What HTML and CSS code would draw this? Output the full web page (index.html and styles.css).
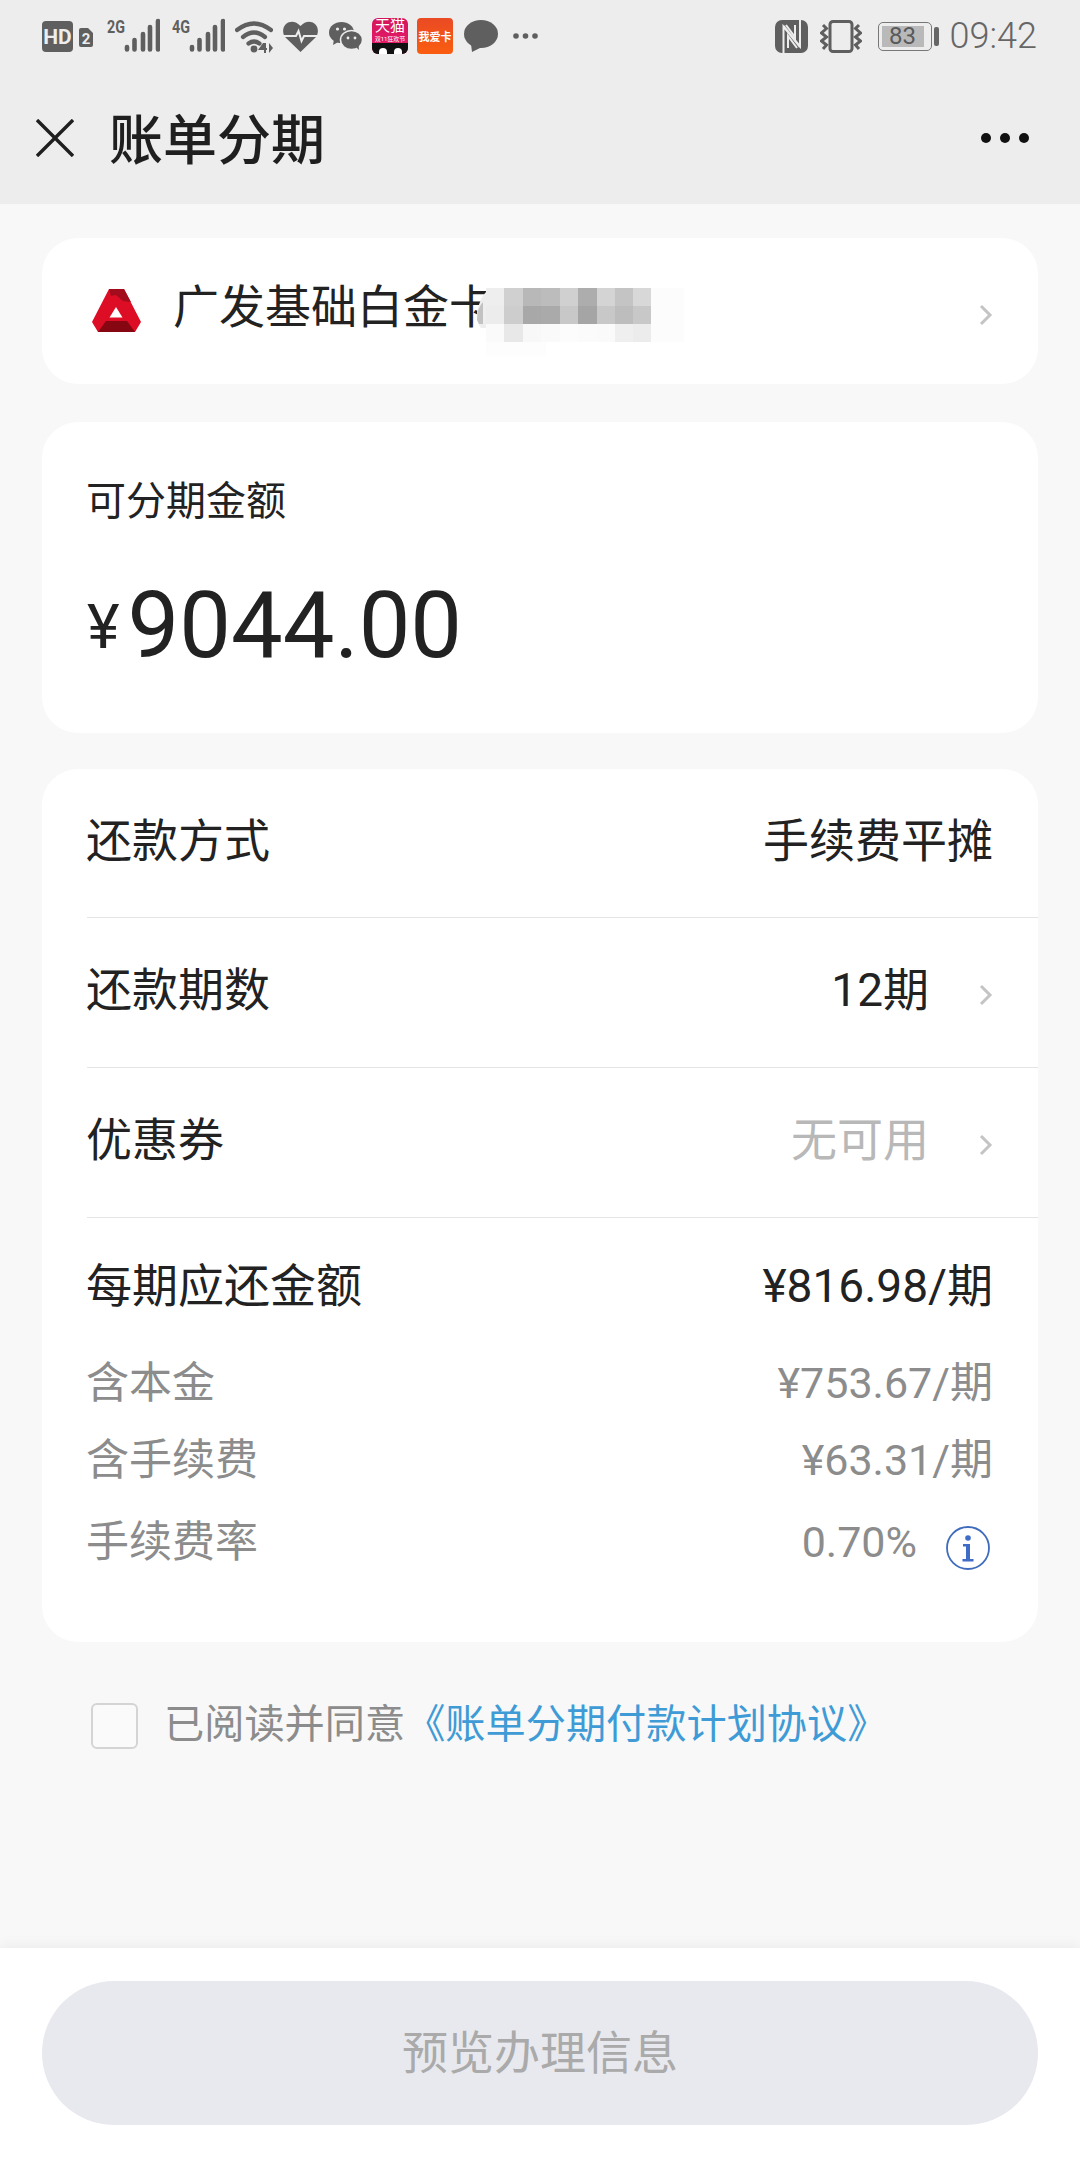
FILE: index.html
```html
<!DOCTYPE html>
<html lang="zh-CN">
  <head>
    <meta charset="UTF-8" />
    <meta name="viewport" content="width=device-width, initial-scale=1.0" />
    <title>账单分期</title>
    <link rel="stylesheet" href="styles.css">
  </head>
  <body>
    <div class="page">
      <div class="top">
        <div class="status">
          <div class="status-left">
            <svg class="ic-hd" width="31" height="31" viewBox="0 0 31 31"><rect width="31" height="31" rx="4" fill="#5f5f5f"/><text x="15.5" y="23" text-anchor="middle" class="svg-label" font-size="21" fill="#ededed">HD</text></svg>
            <svg class="ic-sim" width="14" height="19" viewBox="0 0 14 19"><path d="M2 0h7l5 5v12a2 2 0 0 1-2 2H2a2 2 0 0 1-2-2V2a2 2 0 0 1 2-2z" fill="#5f5f5f"/><text x="7" y="16" text-anchor="middle" class="svg-label" font-size="15" fill="#ededed">2</text></svg>
            <svg class="ic-net1" width="53" height="36" viewBox="0 -2 53 36"><text x="0" y="15" class="svg-label" font-size="19" fill="#5f5f5f" textLength="18" lengthAdjust="spacingAndGlyphs">2G</text><g stroke="#5f5f5f" stroke-width="4.6" stroke-linecap="round"><path d="M20 29v2.500M27.500 22v9.500M36 16v15.500M43 9v22.500M51 3v28.500"/></g></svg>
            <svg class="ic-net2" width="53" height="36" viewBox="0 -2 53 36"><text x="0" y="15" class="svg-label" font-size="19" fill="#5f5f5f" textLength="18" lengthAdjust="spacingAndGlyphs">4G</text><g stroke="#5f5f5f" stroke-width="4.6" stroke-linecap="round"><path d="M20 29v2.500M27.500 22v9.500M36 16v15.500M43 9v22.500M51 3v28.500"/></g></svg>
            <svg width="38" height="33" viewBox="0 0 38 33"><g fill="none" stroke="#5f5f5f" stroke-width="4.200" stroke-linecap="round"><path d="M2 10Q19-3 36 10"/><path d="M8 17Q19 8 30 17"/><path d="M13.500 23.500Q19 19.500 24.500 23.500"/></g><circle cx="19" cy="29" r="3.400" fill="#5f5f5f"/><path d="M28 23l-5 7h6v3h2v-3h1v-2h-1v-5z" fill="#5f5f5f"/><path d="M34 23v10l4-5z" fill="#5f5f5f"/></svg>
            <svg width="35" height="31" viewBox="0 0 35 31"><path d="M17.500 31L2.500 16.500C-1 12.500-.5 6 3 3c4-3.500 10-3 14.500 2 4.500-5 10.500-5.500 14.500-2 3.500 3 4 9.500.5 13.500z" fill="#5f5f5f"/><path d="M0 15h13l2.500-5 3 10 2.500-5h14" fill="none" stroke="#ededed" stroke-width="2"/></svg>
            <svg class="ic-wechat" width="33" height="28" viewBox="0 0 33 28"><ellipse cx="12.500" cy="10.500" rx="12.500" ry="10.500" fill="#5f5f5f"/><path d="M5 17l-1 6 7-4z" fill="#5f5f5f"/><ellipse cx="22.500" cy="18" rx="11" ry="9.500" fill="#5f5f5f" stroke="#ededed" stroke-width="1.500"/><path d="M27 25l3 3-.5-5z" fill="#5f5f5f"/><g fill="#ededed"><circle cx="8.500" cy="7" r="1.600"/><circle cx="15.500" cy="7" r="1.600"/><circle cx="19" cy="16" r="1.400"/><circle cx="26" cy="16" r="1.400"/></g></svg>
            <div class="app-tmall">
              <span class="tmall-name">天猫</span>
              <span class="tmall-sub">双11狂欢节</span>
              <span class="tmall-face"><i></i><i></i></span>
            </div>
            <div class="app-card">
              <span class="card-name">我爱卡</span>
            </div>
            <svg class="ic-bubble" width="34" height="32" viewBox="0 0 34 32"><ellipse cx="17" cy="14" rx="17" ry="14" fill="#5f5f5f"/><path d="M7 24l1 8 10-5z" fill="#5f5f5f"/></svg>
            <svg class="ic-dots" width="25" height="6" viewBox="0 0 25 6"><g fill="#5f5f5f"><circle cx="3" cy="3" r="2.800"/><circle cx="12.500" cy="3" r="2.800"/><circle cx="22" cy="3" r="2.800"/></g></svg>
          </div>
          <div class="status-right">
            <svg width="33" height="33" viewBox="0 0 33 33"><rect width="33" height="33" rx="7" fill="#5f5f5f"/><path d="M8.500 33V6.500L25 27M25 0v26.500L8.500 6M13 28V16l9 12M20 5v12l-9-12" fill="none" stroke="#ededed" stroke-width="2"/></svg>
            <svg class="ic-vibrate" width="42" height="33" viewBox="0 0 42 33"><rect x="10" y="1.500" width="22" height="30" rx="3" fill="none" stroke="#5f5f5f" stroke-width="3"/><g fill="none" stroke="#5f5f5f" stroke-width="3"><path d="M3 5l3.500 3.500L1.500 13l5 4-5 4 5 4L3 29"/><path d="M39 5l-3.500 3.500 5 4.500-5 4 5 4-5 4 3.500 4"/></g></svg>
            <div class="battery"><span class="battery-fill">83</span></div>
            <span class="battery-nub"></span>
            <span class="time">09:42</span>
          </div>
        </div>
        <div class="nav">
          <svg class="close" width="38" height="38" viewBox="0 0 38 38"><path d="M1 1l36 36M37 1L1 37" stroke="#1f1f1f" stroke-width="3.400"/></svg>
          <h1 class="title">账单分期</h1>
          <svg class="more" width="48" height="10" viewBox="0 0 48 10"><g fill="#111"><circle cx="5" cy="5" r="5"/><circle cx="24" cy="5" r="5"/><circle cx="43" cy="5" r="5"/></g></svg>
        </div>
      </div>

      <div class="main">
        <div class="card bank">
          <svg class="bank-logo" width="50" height="44" viewBox="0 0 50 44">
            <path d="M18 0h15l17 33-6 10H7L1 33z" fill="#dc0d24"/>
            <path d="M18 0h15l7 13-8-1-7-6-5 1z" fill="#a30c1c"/>
            <path d="M7 43l8-11h21l8 11z" fill="#860711"/>
            <path d="M25 18l6.500 10.500h-13z" fill="#fff"/>
          </svg>
          <span class="bank-name">广发基础白金卡</span>
          <svg class="mosaic" width="216" height="68" viewBox="0 0 216 68">
            <path d="M9 24Q12 10 18 4V40H13Q9 36 9 24z" fill="#eeeeee"/>
            <path d="M9 32Q9 20 15 14V36H11z" fill="#c2c2c2"/>
            <rect x="183" y="0" width="33" height="54" fill="#fcfcfc"/>
            <rect x="18" y="54" width="60" height="14" fill="#fdfdfd"/>
            <rect x="18" y="0" width="18" height="18" fill="#eeeeee"/>
            <rect x="36" y="0" width="19" height="18" fill="#d0d0d0"/>
            <rect x="55" y="0" width="18" height="18" fill="#b8b8b8"/>
            <rect x="73" y="0" width="19" height="18" fill="#bcbcbc"/>
            <rect x="92" y="0" width="18" height="18" fill="#d0d0d0"/>
            <rect x="110" y="0" width="19" height="18" fill="#adadad"/>
            <rect x="129" y="0" width="18" height="18" fill="#d4d4d4"/>
            <rect x="147" y="0" width="18" height="18" fill="#c4c4c4"/>
            <rect x="165" y="0" width="18" height="18" fill="#d8d8d8"/>
            <rect x="18" y="18" width="18" height="18" fill="#ececec"/>
            <rect x="36" y="18" width="19" height="18" fill="#cdcdcd"/>
            <rect x="55" y="18" width="18" height="18" fill="#a8a8a8"/>
            <rect x="73" y="18" width="19" height="18" fill="#aaaaaa"/>
            <rect x="92" y="18" width="18" height="18" fill="#c8c8c8"/>
            <rect x="110" y="18" width="19" height="18" fill="#a5a5a5"/>
            <rect x="129" y="18" width="18" height="18" fill="#c8c8c8"/>
            <rect x="147" y="18" width="18" height="18" fill="#bdbdbd"/>
            <rect x="165" y="18" width="18" height="18" fill="#c8c8c8"/>
            <rect x="18" y="36" width="18" height="18" fill="#fafafa"/>
            <rect x="36" y="36" width="19" height="18" fill="#e8e8e8"/>
            <rect x="55" y="36" width="18" height="18" fill="#f8f8f8"/>
            <rect x="73" y="36" width="19" height="18" fill="#fafafa"/>
            <rect x="92" y="36" width="18" height="18" fill="#fcfcfc"/>
            <rect x="110" y="36" width="19" height="18" fill="#fbfbfb"/>
            <rect x="129" y="36" width="18" height="18" fill="#fafafa"/>
            <rect x="147" y="36" width="18" height="18" fill="#efefef"/>
            <rect x="165" y="36" width="18" height="18" fill="#ececec"/>
          </svg>
          <svg class="chevron" width="14" height="22" viewBox="0 0 14 22"><path d="M2 2l9 9-9 9" fill="none" stroke="#c4c4c4" stroke-width="3"/></svg>
        </div>

        <div class="card amount">
          <div class="amount-label">可分期金额</div>
          <div class="amount-value"><span class="yen">¥</span><span class="num">9044.00</span></div>
        </div>

        <div class="card plan">
          <div class="row">
            <span>还款方式</span>
            <span>手续费平摊</span>
          </div>
          <div class="row">
            <span>还款期数</span>
            <span class="row-right">12期<svg class="chevron" width="14" height="22" viewBox="0 0 14 22"><path d="M2 2l9 9-9 9" fill="none" stroke="#c4c4c4" stroke-width="3"/></svg></span>
          </div>
          <div class="row">
            <span>优惠券</span>
            <span class="row-right none">无可用<svg class="chevron" width="14" height="22" viewBox="0 0 14 22"><path d="M2 2l9 9-9 9" fill="none" stroke="#c4c4c4" stroke-width="3"/></svg></span>
          </div>
          <div class="detail">
            <div class="detail-main">
              <span>每期应还金额</span>
              <span>¥816.98/期</span>
            </div>
            <div class="detail-sub first">
              <span>含本金</span>
              <span>¥753.67/期</span>
            </div>
            <div class="detail-sub">
              <span>含手续费</span>
              <span>¥63.31/期</span>
            </div>
            <div class="detail-sub last">
              <span>手续费率</span>
              <span class="rate">0.70%<svg class="info" width="44" height="44" viewBox="0 0 44 44"><circle cx="22" cy="22" r="21" fill="none" stroke="#3f6cbd" stroke-width="1.800"/><circle cx="22" cy="12" r="2.800" fill="#3f6cc6"/><path d="M17 18h7v15h3.500v2.500h-11V33H20V20.500h-3z" fill="#3f6cc6"/></svg></span>
            </div>
          </div>
        </div>

        <div class="agree">
          <span class="checkbox"></span>
          <span class="agree-text">已阅读并同意<a class="agree-link">《账单分期付款计划协议》</a></span>
        </div>
      </div>

      <div class="footer">
        <button class="preview">预览办理信息</button>
      </div>
    </div>
  </body>
</html>
```

FILE: styles.css
```css
* {
  margin: 0;
  padding: 0;
  box-sizing: border-box;
}
body {
  font-family: Roboto, "Noto Sans CJK SC", sans-serif;
  color: #222;
  background-color: #f8f8f8;
}
.page {
  display: flex;
  flex-direction: column;
  height: 2160px;
  overflow: hidden;
}
.svg-label {
  font-family: "Roboto", sans-serif;
  font-weight: 700;
}

/* status bar + title */
.top {
  height: 204px;
  background-color: #ededed;
}
.status {
  display: flex;
  justify-content: space-between;
  align-items: center;
  height: 72px;
  padding: 0 43px 0 42px;
}
.status-left,
.status-right {
  display: flex;
  align-items: center;
  gap: 10px;
}
.ic-sim {
  margin-left: -4px;
  margin-top: 2px;
}
.ic-net1 {
  margin-left: 4px;
  margin-top: -4px;
}
.ic-net2 {
  margin-left: 2px;
  margin-top: -4px;
}
.ic-wechat {
  margin-left: 1px;
}
.app-tmall {
  position: relative;
  display: flex;
  flex-direction: column;
  align-items: center;
  width: 36px;
  height: 36px;
  border-radius: 6px;
  overflow: hidden;
  color: #fff;
  background-image: linear-gradient(#d3155c, #e81e6a);
}
.tmall-name {
  font-size: 15px;
  line-height: 17px;
}
.tmall-sub {
  font-size: 6px;
  line-height: 8px;
  white-space: nowrap;
}
.tmall-face {
  display: flex;
  justify-content: space-around;
  align-items: flex-end;
  width: 100%;
  height: 11px;
  padding: 0 3px;
  background-color: #111;
}
.tmall-face i {
  width: 8px;
  height: 6px;
  border-radius: 4px 4px 0 0;
  background-color: #fff;
}
.app-card {
  display: flex;
  justify-content: center;
  align-items: center;
  width: 36px;
  height: 36px;
  margin-left: -1px;
  border-radius: 4px;
  background-image: linear-gradient(#ea4a24, #fa5d0f);
}
.card-name {
  font-size: 11px;
  font-weight: 700;
  white-space: nowrap;
  color: #fff;
}
.ic-bubble {
  margin-left: 1px;
}
.ic-dots {
  margin-left: 5px;
}
.status-right {
  gap: 0;
}
.ic-vibrate {
  margin-left: 12px;
}
.battery {
  width: 54px;
  height: 29px;
  margin-left: 16px;
  padding: 3px;
  border: 1.5px solid #777;
  border-radius: 5px;
}
.battery-fill {
  display: block;
  width: 42px;
  height: 100%;
  font-size: 24px;
  line-height: 20px;
  text-align: center;
  color: #5a5a5a;
  background-color: #b9b9b9;
}
.battery-nub {
  width: 5px;
  height: 19px;
  margin-left: 2px;
  border-radius: 2px;
  background-color: #666;
}
.time {
  margin-left: 11px;
  font-size: 36px;
  font-weight: 300;
  line-height: 36px;
  color: #666;
}
.nav {
  display: flex;
  align-items: center;
  height: 132px;
  padding: 0 51px 0 36px;
}
.close {
  flex-shrink: 0;
}
.title {
  flex: 1;
  margin-left: 35px;
  padding-top: 8px;
  font-size: 54px;
  font-weight: 500;
  line-height: 60px;
  color: #1f1f1f;
}
.main {
  flex: 1;
  padding: 34px 42px 0;
}

/* white cards */
.card {
  border-radius: 36px;
  background-color: #fff;
}
.bank {
  position: relative;
  display: flex;
  align-items: center;
  height: 146px;
  padding: 0 45px 0 49px;
}
.bank-logo {
  flex-shrink: 0;
  margin-top: -1px;
}
.bank-name {
  flex: 1;
  margin-left: 32px;
  margin-top: -8px;
  font-size: 46px;
  line-height: 60px;
}
.mosaic {
  position: absolute;
  left: 426px;
  top: 50px;
}
.chevron {
  flex-shrink: 0;
  margin-top: 8px;
}
.amount {
  height: 311px;
  margin-top: 38px;
  padding: 57px 45px 0;
}
.amount-label {
  margin-left: -1px;
  font-size: 40px;
  line-height: 46px;
}
.amount-value {
  margin-top: 46px;
  line-height: 110px;
  white-space: nowrap;
}
.yen {
  margin-right: 8px;
  font-size: 62px;
  vertical-align: 9px;
}
.num {
  font-size: 92px;
}
.plan {
  height: 873px;
  margin-top: 36px;
  padding-left: 45px;
  font-size: 46px;
}
.row {
  display: flex;
  justify-content: space-between;
  align-items: center;
  height: 150px;
  padding: 0 45px 13px 0;
  border-bottom: 1px solid #e4e4e4;
}
.row:first-child {
  height: 149px;
}
.row > span:first-child,
.detail-main > span:first-child,
.detail-sub > span:first-child {
  margin-left: -1px;
}
.row-right {
  display: flex;
  align-items: center;
}
.row-right .chevron {
  margin-left: 50px;
  margin-top: 17px;
}
.none {
  color: #b8b8b8;
}
.detail {
  padding: 38px 45px 0 0;
}
.detail-main,
.detail-sub {
  display: flex;
  justify-content: space-between;
}
.detail-main {
  line-height: 60px;
}
.detail-sub {
  margin-top: 21px;
  font-size: 43px;
  line-height: 56px;
  color: #8c8c8c;
}
.detail-sub.first {
  margin-top: 39px;
}
.detail-sub.last {
  margin-top: 26px;
}
.rate {
  display: flex;
  align-items: flex-start;
}
.info {
  margin: 12px 3px 0 29px;
}

/* agreement + bottom button */
.agree {
  display: flex;
  align-items: center;
  margin-top: 61px;
  padding-left: 49px;
}
.checkbox {
  width: 47px;
  height: 46px;
  border: 2px solid #d4d4d4;
  border-radius: 6px;
  background-color: #fafafa;
}
.agree-text {
  margin-left: 26px;
  margin-top: -2px;
  font-size: 40.2px;
  line-height: 46px;
  color: #8c8c8c;
}
.agree-link {
  color: #3f9bd6;
}
.footer {
  height: 212px;
  padding: 33px 42px 0;
  background-color: #fff;
  box-shadow: 0 -3px 12px rgba(0, 0, 0, 0.05);
}
.preview {
  width: 100%;
  height: 144px;
  padding-bottom: 8px;
  border: none;
  border-radius: 72px;
  font-family: Roboto, "Noto Sans CJK SC", sans-serif;
  font-size: 46px;
  color: #aaa;
  background-color: #e8e9ee;
}
```
